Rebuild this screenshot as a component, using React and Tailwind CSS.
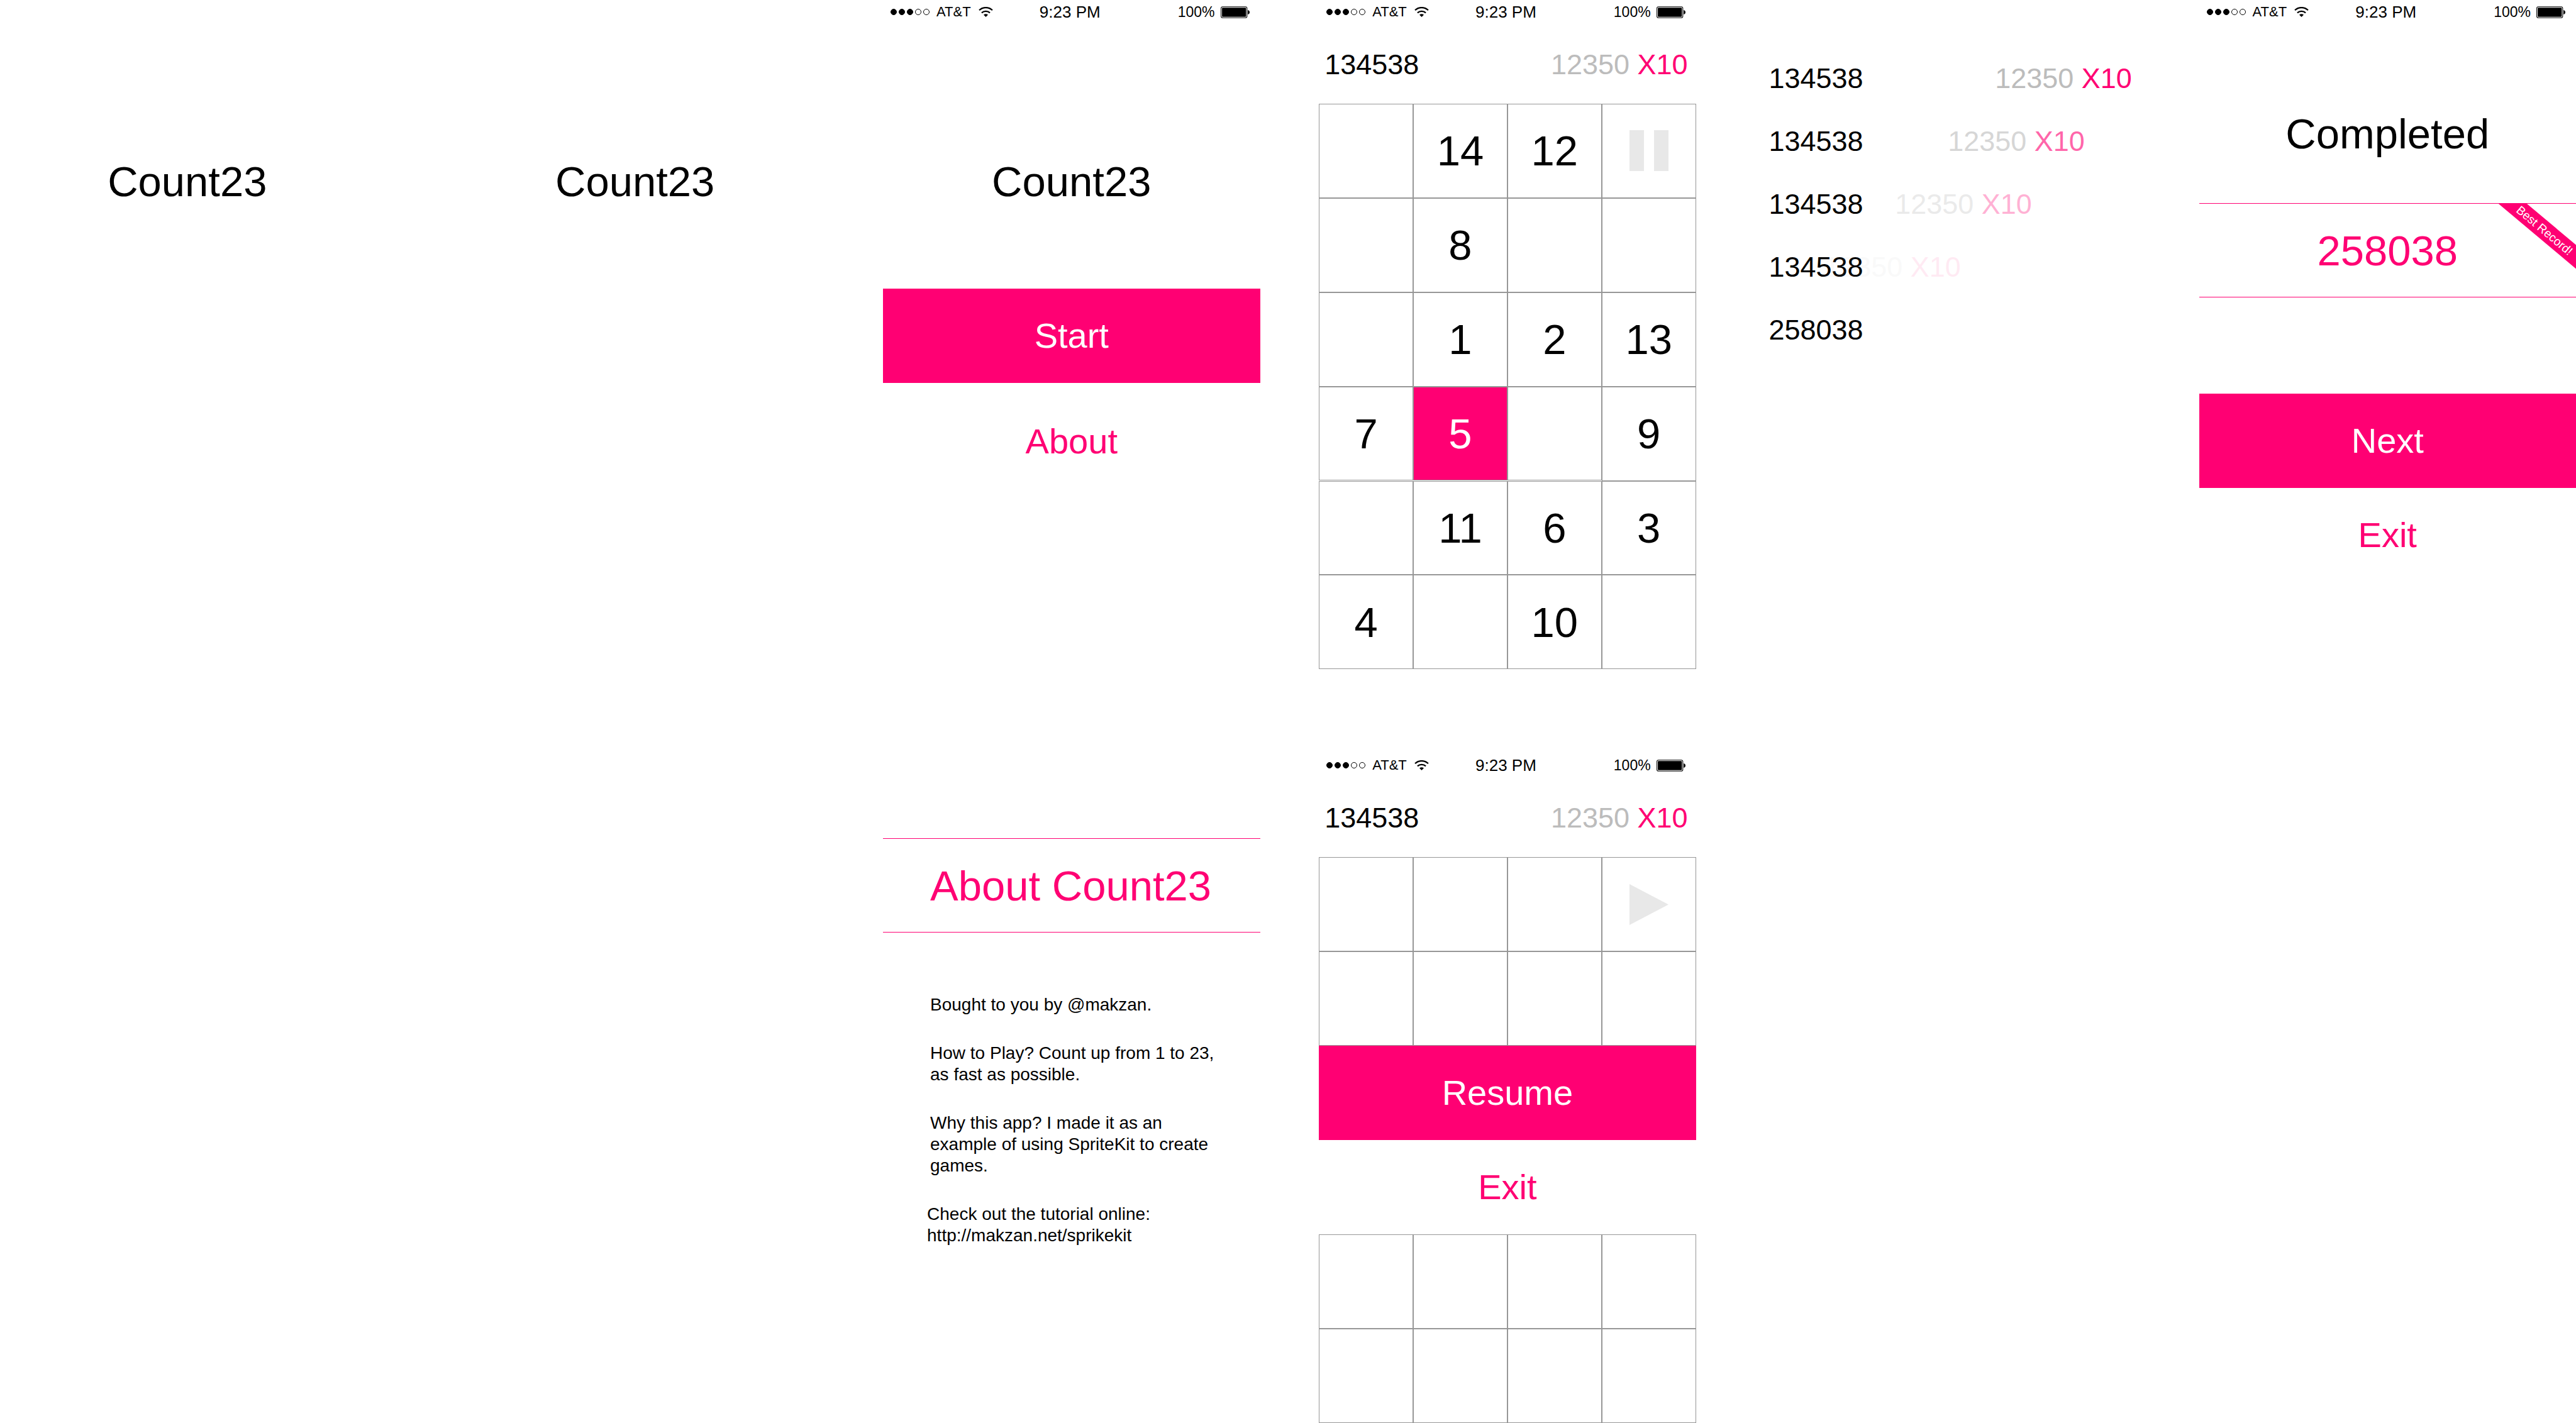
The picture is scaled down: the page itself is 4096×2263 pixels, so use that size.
function Wifi() {
  return (
    <svg viewBox="0 0 24 17" className="h-4 w-[23px]" fill="none" stroke="black" aria-hidden="true">
      <path d="M0.9 5.6 A16 16 0 0 1 23.1 5.6" strokeWidth="2.4" />
      <path d="M5 10 A10.4 10.4 0 0 1 19 10" strokeWidth="2.4" />
      <path d="M8.3 13.4 Q12 10.7 15.7 13.4 L12 17 Z" fill="black" stroke="none" />
    </svg>
  );
}

function Battery() {
  return (
    <svg viewBox="0 0 49 20" className="h-[19px] w-[46px]" aria-hidden="true">
      <rect x="0.6" y="0.6" width="44" height="18.8" rx="2.8" fill="none" stroke="black" strokeWidth="1.1" />
      <rect x="2.2" y="2.2" width="40.8" height="15.6" rx="1.4" fill="black" />
      <path d="M46 6.2 Q49 7 49 10 Q49 13 46 13.8 Z" fill="black" />
    </svg>
  );
}

function StatusBar() {
  return (
    <div className="grid h-[38px] shrink-0 grid-cols-[1fr_auto_1fr] items-center pl-3 pr-[17px]">
      <div className="flex items-center">
        <div className="flex gap-[3px]">
          {[1, 1, 1, 0, 0].map((on, i) => (
            <span
              key={i}
              className={
                on
                  ? "size-[10px] rounded-full border border-black bg-black"
                  : "size-[10px] rounded-full border border-black"
              }
            />
          ))}
        </div>
        <span className="ml-[11px] mr-3 text-[22px]">AT&amp;T</span>
        <Wifi />
      </div>
      <span className="text-[26px]">9:23 PM</span>
      <div className="flex items-center justify-end gap-[9px]">
        <span className="text-[23px]">100%</span>
        <Battery />
      </div>
    </div>
  );
}

function Screen({ status = false, className, children }) {
  return (
    <section className={`flex min-w-0 flex-col ${className}`}>
      {status ? <StatusBar /> : <div className="h-[38px] shrink-0" />}
      {children}
    </section>
  );
}

function Title() {
  return (
    <h1 className="flex h-[421px] items-center justify-center pt-20 text-[67px]">Count23</h1>
  );
}

function SolidButton({ children }) {
  return (
    <button type="button" className="h-[150px] w-full bg-[#ff0073] text-[56px] text-white">
      {children}
    </button>
  );
}

function PlainButton({ children }) {
  return (
    <button type="button" className="h-[150px] w-full text-[56px] text-[#ff0073]">
      {children}
    </button>
  );
}

function Bonus() {
  return (
    <span className="text-[#bcbcbc]">
      12350 <span className="text-[#ff0073]">X10</span>
    </span>
  );
}

function ScoreBar() {
  return (
    <div className="flex h-[127px] items-center justify-between pl-[9px] pr-[13px] pt-[2px] text-[45px]">
      <span>134538</span>
      <Bonus />
    </div>
  );
}

function PauseIcon() {
  return (
    <svg viewBox="0 0 62 65" className="h-[65px] w-[62px]" fill="#e8e8e8" aria-hidden="true">
      <rect width="23" height="65" />
      <rect x="39" width="23" height="65" />
    </svg>
  );
}

function PlayIcon() {
  return (
    <svg viewBox="0 0 62 65" className="h-[65px] w-[62px]" fill="#e8e8e8" aria-hidden="true">
      <path d="M0 0 L62 32.5 L0 65 Z" />
    </svg>
  );
}

function Cell({ value, selected }) {
  const base = "flex aspect-square items-center justify-center border border-[#979797] text-[67px]";
  if (value === "pause" || value === "play") {
    return (
      <button type="button" aria-label={value} className={base}>
        {value === "pause" ? <PauseIcon /> : <PlayIcon />}
      </button>
    );
  }
  if (!value) return <div className={base} />;
  return (
    <button type="button" className={selected ? `${base} bg-[#ff0073] text-white` : base}>
      {value}
    </button>
  );
}

function Board({ cells, selected }) {
  return (
    <div className="grid grid-cols-4">
      {cells.map((value, i) => (
        <Cell key={i} value={value} selected={selected !== undefined && value === selected} />
      ))}
    </div>
  );
}

const board = [
  0, 14, 12, "pause",
  0, 8, 0, 0,
  0, 1, 2, 13,
  7, 5, 0, 9,
  0, 11, 6, 3,
  4, 0, 10, 0,
];

const frames = [
  { score: 134538, bonus: "pr-[13px]" },
  { score: 134538, bonus: "pr-[88px] opacity-60" },
  { score: 134538, bonus: "pr-[172px] opacity-30" },
  { score: 134538, bonus: "pr-[285px] opacity-[0.08]" },
  { score: 258038, bonus: null },
];

export default function App() {
  return (
    <main className="grid min-h-screen grid-cols-[636fr_122fr_640fr_101fr_640fr_100fr_640fr_114fr_640fr_100fr_640fr] content-start gap-y-[134px] overflow-hidden bg-white font-['Liberation_Sans',Arial,sans-serif] leading-none text-black">
      <Screen className="col-start-1">
        <Title />
      </Screen>

      <Screen className="col-start-3">
        <Title />
      </Screen>

      <Screen status className="col-start-5">
        <Title />
        <SolidButton>Start</SolidButton>
        <div className="pt-[18px]">
          <PlainButton>About</PlainButton>
        </div>
      </Screen>

      <Screen status className="col-start-7">
        <ScoreBar />
        <Board cells={board} selected={5} />
      </Screen>

      <Screen className="col-start-9">
        <ul className="pt-9 text-[45px]">
          {frames.map((frame, i) => (
            <li key={i} className="grid h-[100px] grid-cols-1 items-center">
              {frame.bonus && (
                <div className={`col-start-1 row-start-1 text-right ${frame.bonus}`}>
                  <Bonus />
                </div>
              )}
              <span className="col-start-1 row-start-1 pl-[9px]">{frame.score}</span>
            </li>
          ))}
        </ul>
      </Screen>

      <Screen status className="col-start-11">
        <h2 className="flex h-[285px] items-center justify-center pt-16 text-[67px]">Completed</h2>
        <div className="relative flex h-[150px] items-center justify-center overflow-hidden border-y border-[#ff0073] text-[67px] text-[#ff0073]">
          258038
          <span className="absolute -right-[50px] top-7 w-[200px] rotate-40 bg-[#ff0073] text-center text-[19px] leading-[29px] text-white">
            Best Record!
          </span>
        </div>
        <div className="pt-[153px]">
          <SolidButton>Next</SolidButton>
          <PlainButton>Exit</PlainButton>
        </div>
      </Screen>

      <Screen className="col-start-5">
        <div className="pt-[97px]">
          <h2 className="flex h-[150px] items-center border-y border-[#ff0073] pl-[75px] text-[67px] text-[#ff0073]">
            About Count23
          </h2>
        </div>
        <div className="flex flex-col gap-[43px] pt-[98px] text-[28px] leading-[34px]">
          <p className="pl-[75px] pr-[60px]">Bought to you by @makzan.</p>
          <p className="pl-[75px] pr-[60px]">How to Play? Count up from 1 to 23, as fast as possible.</p>
          <p className="pl-[75px] pr-[60px]">
            Why this app? I made it as an example of using SpriteKit to create games.
          </p>
          <p className="pl-[70px] pr-[60px]">
            Check out the tutorial online:{" "}
            <a href="http://makzan.net/sprikekit" className="block">
              http://makzan.net/sprikekit
            </a>
          </p>
        </div>
      </Screen>

      <Screen status className="col-start-7">
        <ScoreBar />
        <Board cells={[0, 0, 0, "play", 0, 0, 0, 0]} />
        <SolidButton>Resume</SolidButton>
        <PlainButton>Exit</PlainButton>
        <Board cells={[0, 0, 0, 0, 0, 0, 0, 0]} />
      </Screen>
    </main>
  );
}
